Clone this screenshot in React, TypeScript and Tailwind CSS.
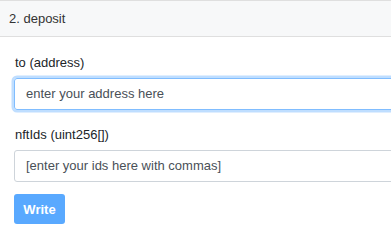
export default function App() {
  return (
    <div className="w-[391px] h-[241px] overflow-hidden bg-white font-['Liberation_Sans',Arial,sans-serif] text-[13px] text-[#212529]">
      <div className="h-[37px] border-y border-[#dfdfdf] bg-[#f7f8f9] pl-[9px] flex items-center text-[#333]">
        2. deposit
      </div>
      <div className="pl-[14px] pt-[16px]">
        <Field label="to (address)" value="enter your address here" focused />
        <div className="mt-[15px]">
          <Field label="nftIds (uint256[])" value="[enter your ids here with commas]" />
        </div>
        <button className="mt-[12px] h-[30px] w-[51px] rounded-[3px] bg-[#59a9ff] text-white font-bold leading-none">
          Write
        </button>
      </div>
    </div>
  );
}

function Field({ label, value, focused }: { label: string; value: string; focused?: boolean }) {
  return (
    <div>
      <div className="leading-[20px] pl-px">{label}</div>
      <div
        className={
          focused
            ? 'mt-[5px] h-[32px] w-[420px] rounded-[3px] border border-[#80bdff] shadow-[0_0_0_2.5px_rgba(0,123,255,0.25)] pl-[11px] flex items-center text-[#495057]'
            : 'mt-[5px] h-[32px] w-[420px] rounded-[3px] border border-[#ced4da] pl-[11px] flex items-center text-[#495057]'
        }
      >
        {value}
      </div>
    </div>
  );
}
